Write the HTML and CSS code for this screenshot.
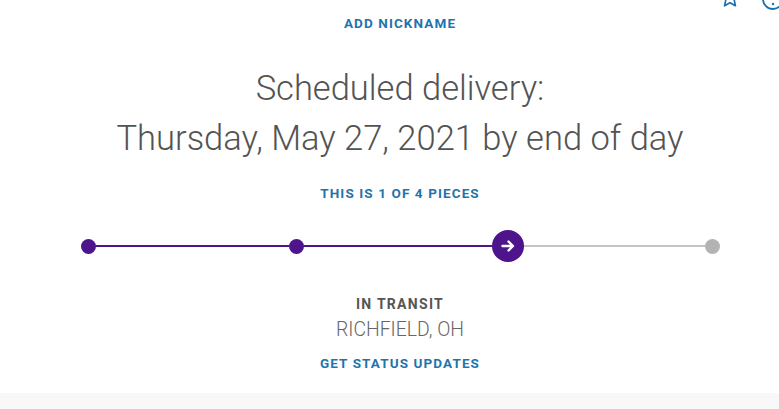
FILE: index.html
```html
<!DOCTYPE html>
<html lang="en">
<head>
    <meta charset="UTF-8">
    <meta name="viewport" content="width=device-width, initial-scale=1.0">
    <title>Tracking</title>
    <link rel="stylesheet" href="styles.css">
</head>
<body>
    <div class="page">
        <div class="top-icons">
            <svg class="icon" width="22" height="22" viewBox="0 0 24 24" fill="none" stroke="#1a6fad" stroke-width="1.8" stroke-linejoin="round">
                <path d="M12 2.5l2.9 6.1 6.6.8-4.9 4.5 1.3 6.6L12 17.2l-5.9 3.3 1.3-6.6-4.9-4.5 6.6-.8z"/>
            </svg>
            <svg class="icon" width="24" height="24" viewBox="0 0 24 24" fill="none" stroke="#1a6fad" stroke-width="1.8">
                <circle cx="12" cy="12" r="10"/>
                <circle cx="12" cy="17" r="1.2" fill="#1a6fad" stroke="none"/>
            </svg>
        </div>

        <section class="shipment">
            <a class="link nickname" href="#">ADD NICKNAME</a>

            <h1 class="delivery">
                <span>Scheduled delivery:</span>
                <span>Thursday, May 27, 2021 by end of day</span>
            </h1>

            <a class="link pieces" href="#">THIS IS 1 OF 4 PIECES</a>

            <div class="progress">
                <span class="dot done"></span>
                <span class="bar done bar-1"></span>
                <span class="dot done"></span>
                <span class="bar done bar-2"></span>
                <span class="current">
                    <svg width="16" height="16" viewBox="0 0 16 16" fill="none" stroke="#fff" stroke-width="2.4" stroke-linecap="round" stroke-linejoin="round">
                        <path d="M2.5 8h10M8.5 3.5L13 8l-4.5 4.5"/>
                    </svg>
                </span>
                <span class="bar bar-3"></span>
                <span class="dot"></span>
            </div>

            <div class="status">IN TRANSIT</div>
            <div class="location">RICHFIELD, OH</div>
            <a class="link updates" href="#">GET STATUS UPDATES</a>
        </section>

        <div class="band"></div>
    </div>
</body>
</html>
```

FILE: styles.css
```css
body {
    margin: 0;
    padding: 0;
    font-family: Roboto, "Noto Sans", sans-serif;
    background: #fff;
    overflow: hidden;
}
.page {
    position: relative;
    width: 779px;
    height: 409px;
    display: flex;
    flex-direction: column;
}
.top-icons {
    position: absolute;
    top: -13px;
    right: -6px;
    display: flex;
    gap: 20px;
}
.shipment {
    flex: 1;
    display: flex;
    flex-direction: column;
    align-items: center;
    padding-left: 21px;
}
.link {
    color: #1f74ad;
    font-weight: 700;
    font-size: 13.5px;
    line-height: 16px;
    letter-spacing: 1.1px;
    text-decoration: none;
}
.nickname {
    margin-top: 15px;
}
.delivery {
    margin: 32px 0 0;
    display: flex;
    flex-direction: column;
    align-items: center;
    font-weight: 300;
    font-size: 34.5px;
    line-height: 50px;
    color: #535353;
}
.pieces {
    margin-top: 22px;
}
.progress {
    margin-top: 29px;
    width: 639px;
    display: flex;
    align-items: center;
}
.dot {
    width: 15px;
    height: 15px;
    border-radius: 50%;
    background: #b3b3b3;
    flex: none;
}
.dot.done {
    background: #4d148c;
}
.bar {
    height: 2px;
    background: #c4c4c4;
    flex: none;
}
.bar.done {
    background: #4d148c;
}
.bar-1 {
    width: 193px;
}
.bar-2 {
    width: 188.5px;
}
.bar-3 {
    width: 180.5px;
}
.current {
    width: 32px;
    height: 32px;
    border-radius: 50%;
    background: #4d148c;
    flex: none;
    display: flex;
    align-items: center;
    justify-content: center;
}
.status {
    margin-top: 34px;
    font-weight: 700;
    font-size: 14px;
    line-height: 16px;
    letter-spacing: 1.3px;
    color: #555;
}
.location {
    margin-top: 6px;
    font-weight: 300;
    font-size: 19.4px;
    line-height: 23px;
    color: #666;
}
.updates {
    margin-top: 14px;
}
.band {
    height: 16px;
    background: #f8f8f8;
}
```
